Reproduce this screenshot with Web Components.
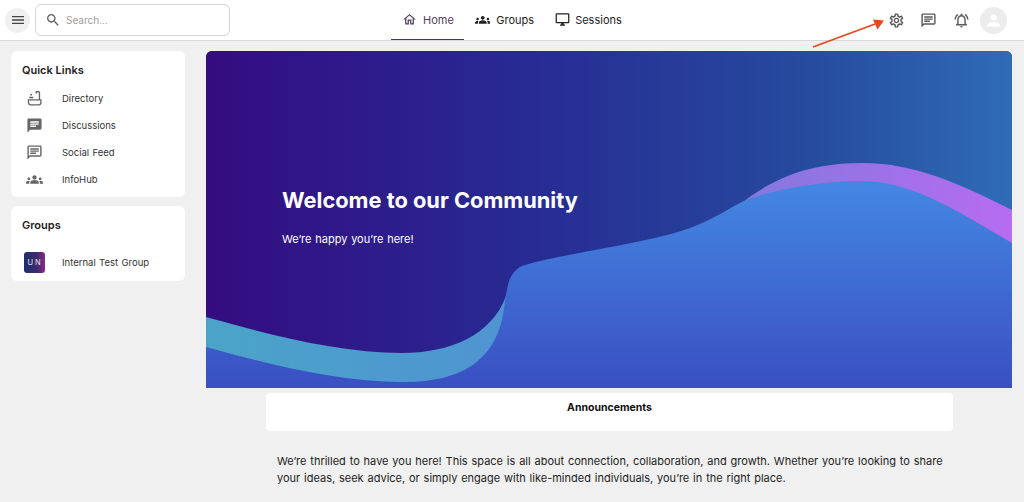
<!DOCTYPE html>
<html lang="en"><head><meta charset="utf-8"><title>Community</title>
<style>
html,body{margin:0;height:100%;overflow:hidden}
body{background:#f0f0f0;font-family:Inter,"Noto Sans",sans-serif;color:#1e1e1e;position:relative}
app-main{padding:10px 12px 0 11px;display:grid;grid-template-columns:174px 806px;column-gap:21px}
aside{display:flex;flex-direction:column;gap:9px}
</style></head><body>
<script>
const P={
menu:'<path d="M3 18h18v-2H3v2zm0-5h18v-2H3v2zm0-7v2h18V6H3z"/>',
search:'<path d="M15.5 14h-.79l-.28-.27C15.41 12.59 16 11.11 16 9.5 16 5.91 13.09 3 9.5 3S3 5.91 3 9.5 5.91 16 9.5 16c1.61 0 3.09-.59 4.23-1.57l.27.28v.79l5 4.99L20.49 19l-4.99-5zm-6 0C7.01 14 5 11.99 5 9.5S7.01 5 9.5 5 14 7.01 14 9.5 11.99 14 9.5 14z"/>',
home:'<path d="M12 5.69l5 4.5V18h-2v-6H9v6H7v-7.81l5-4.5M12 3L2 12h3v8h6v-6h2v6h6v-8h3L12 3z"/>',
groups:'<path d="M4 13c1.1 0 2-.9 2-2s-.9-2-2-2-2 .9-2 2 .9 2 2 2zm1.13 1.1C4.76 14.04 4.39 14 4 14c-.99 0-1.93.21-2.78.58C.48 14.9 0 15.62 0 16.43V18h4.5v-1.61c0-.83.23-1.61.63-2.29zM20 13c1.1 0 2-.9 2-2s-.9-2-2-2-2 .9-2 2 .9 2 2 2zm4 3.43c0-.81-.48-1.53-1.22-1.85C21.93 14.21 20.99 14 20 14c-.39 0-.76.04-1.13.1.4.68.63 1.46.63 2.29V18H24v-1.57zm-7.76-2.65c-1.17-.52-2.61-.9-4.24-.9-1.63 0-3.07.39-4.24.9C6.68 14.13 6 15.21 6 16.39V18h12v-1.61c0-1.18-.68-2.26-1.76-2.61zM12 12c1.66 0 3-1.34 3-3s-1.34-3-3-3-3 1.34-3 3 1.34 3 3 3z"/>',
desktop:'<path d="M21 2H3c-1.1 0-2 .9-2 2v12c0 1.1.9 2 2 2h7v2H8v2h8v-2h-2v-2h7c1.1 0 2-.9 2-2V4c0-1.1-.9-2-2-2zm0 14H3V4h18v12z"/>',
gear:'<path d="M19.43 12.98c.04-.32.07-.64.07-.98 0-.34-.03-.66-.07-.98l2.11-1.65c.19-.15.24-.42.12-.64l-2-3.46c-.09-.16-.26-.25-.44-.25-.06 0-.12.01-.17.03l-2.49 1c-.52-.4-1.08-.73-1.69-.98l-.38-2.65C14.46 2.18 14.25 2 14 2h-4c-.25 0-.46.18-.49.42l-.38 2.65c-.61.25-1.17.59-1.69.98l-2.49-1c-.06-.02-.12-.03-.18-.03-.17 0-.34.09-.43.25l-2 3.46c-.13.22-.07.49.12.64l2.11 1.65c-.04.32-.07.65-.07.98 0 .33.03.66.07.98l-2.11 1.65c-.19.15-.24.42-.12.64l2 3.46c.09.16.26.25.44.25.06 0 .12-.01.17-.03l2.49-1c.52.4 1.08.73 1.69.98l.38 2.65c.03.24.24.42.49.42h4c.25 0 .46-.18.49-.42l.38-2.65c.61-.25 1.17-.59 1.69-.98l2.49 1c.06.02.12.03.18.03.17 0 .34-.09.43-.25l2-3.46c.12-.22.07-.49-.12-.64l-2.11-1.65zm-1.98-1.71c.04.31.05.52.05.73 0 .21-.02.43-.05.73l-.14 1.13.89.7 1.08.84-.7 1.21-1.27-.51-1.04-.42-.9.68c-.43.32-.84.56-1.25.73l-1.06.43-.16 1.13-.2 1.35h-1.4l-.19-1.35-.16-1.13-1.06-.43c-.43-.18-.83-.41-1.23-.71l-.91-.7-1.06.43-1.27.51-.7-1.21 1.08-.84.89-.7-.14-1.13c-.03-.31-.05-.54-.05-.74s.02-.43.05-.73l.14-1.13-.89-.7-1.08-.84.7-1.21 1.27.51 1.04.42.9-.68c.43-.32.84-.56 1.25-.73l1.06-.43.16-1.13.2-1.35h1.39l.19 1.35.16 1.13 1.06.43c.43.18.83.41 1.23.71l.91.7 1.06-.43 1.27-.51.7 1.21-1.07.85-.89.7.14 1.13zM12 8c-2.21 0-4 1.79-4 4s1.79 4 4 4 4-1.79 4-4-1.79-4-4-4zm0 6c-1.1 0-2-.9-2-2s.9-2 2-2 2 .9 2 2-.9 2-2 2z"/>',
chat:'<path d="M20 2H4c-1.1 0-2 .9-2 2v18l4-4h14c1.1 0 2-.9 2-2V4c0-1.1-.9-2-2-2zm0 14H5.17L4 17.17V4h16v12z"/><path d="M6 12h8v2H6zm0-3h12v2H6zm0-3h12v2H6z"/>',
chatfill:'<path d="M20 2H4c-1.1 0-1.99.9-1.99 2L2 22l4-4h14c1.1 0 2-.9 2-2V4c0-1.1-.9-2-2-2zM6 9h12v2H6V9zm8 5H6v-2h8v2zm4-6H6V6h12v2z"/>',
bell:'<path d="M7.58 4.08 6.15 2.65C3.75 4.48 2.17 7.3 2.03 10.5h2c.15-2.65 1.51-4.97 3.55-6.42zm12.39 6.42h2c-.15-3.2-1.73-6.02-4.12-7.85l-1.42 1.43c2.02 1.45 3.39 3.77 3.54 6.42zM18 11c0-3.07-1.64-5.64-4.5-6.32V4c0-.83-.67-1.5-1.5-1.5s-1.5.67-1.5 1.5v.68C7.63 5.36 6 7.92 6 11v5l-2 2v1h16v-1l-2-2v-5zm-2 6H8v-6c0-2.48 1.51-4.5 4-4.5s4 2.02 4 4.5v6zm-4 5c.14 0 .27-.01.4-.04.65-.14 1.18-.58 1.44-1.18.1-.24.15-.5.15-.78h-4c.01 1.1.9 2 2.01 2z"/>',
person:'<path d="M12 12c2.21 0 4-1.79 4-4s-1.79-4-4-4-4 1.79-4 4 1.79 4 4 4zm0 2c-2.67 0-8 1.34-8 4v2h16v-2c0-2.66-5.33-4-8-4z"/>',
sink:'<path fill="none" stroke="currentColor" stroke-width="1.9" d="M3.5 14h17.5v4a3 3 0 0 1-3 3H6.5a3 3 0 0 1-3-3z"/><path fill="none" stroke="currentColor" stroke-width="1.9" d="M19 14V4a1.5 1.5 0 0 0-1.5-1.5H14.5V5"/><path d="M4.5 9.5h6v2h-6zM6 5.5h2.4v2.4H6z"/>'
};
function def(name,css,html){customElements.define(name,class extends HTMLElement{
 connectedCallback(){if(this.shadowRoot)return;const s=this.attachShadow({mode:'open'});s.innerHTML='<style>'+css+'</style>'+(typeof html==='function'?html(this):html);}
});}
def('app-icon',':host{display:inline-flex;width:var(--s,18px);height:var(--s,18px);color:inherit;flex:none}svg{width:100%;height:100%;fill:currentColor;display:block}',
 e=>`<svg viewBox="0 0 24 24" aria-hidden="true">${P[e.getAttribute('name')]||''}</svg>`);
def('round-button',':host{display:flex;align-items:center;justify-content:center;width:25px;height:25px;border-radius:50%;background:#f0f0f0;color:#444;--s:16px;flex:none}',
 '<app-icon name="menu"></app-icon>');
def('search-box',':host{display:flex;align-items:center;box-sizing:border-box;width:195px;height:32px;margin-left:5px;border:1px solid #d4d4d4;border-radius:6px;background:#fff;padding-left:9px;gap:5px;color:#5f5f5f;--s:16px;font-size:10px}span{color:#9c9c9c}',
 '<app-icon name="search"></app-icon><span>Search...</span>');
def('nav-tab',`:host{display:flex;align-items:center;height:40px;box-sizing:border-box;padding:0 10.5px;gap:6px;font-size:11px;color:#222;border-bottom:1.5px solid transparent}
 :host([active]){color:#50405f;border-bottom-color:#4b3560;padding:0 10.5px 0 11px}
 :host([tight]){gap:5px}`,
 e=>`<app-icon name="${e.getAttribute('icon')}" style="--s:${e.getAttribute('size')||15}px"></app-icon><slot></slot>`);
def('top-bar',`:host{display:flex;align-items:flex-start;height:41px;box-sizing:border-box;background:#fff;border-bottom:1px solid #d9d9d9}
 .left{display:flex;align-items:center;height:40px;flex:0 0 391px;padding-left:5px;box-sizing:border-box}
 .tabs{display:flex}
 .right{margin-left:auto;display:flex;align-items:center;height:40px;padding-right:17px;color:#5a5a5a}
 .right app-icon{--s:17px;margin-right:15.5px}
 .right app-icon.last{margin-right:10.5px}
 .ava{width:27px;height:27px;border-radius:50%;background:#ececec;display:flex;align-items:center;justify-content:center;color:#fff}
 .ava app-icon{--s:19px;margin:0}`,
 `<div class="left"><round-button></round-button><search-box></search-box></div>
 <nav class="tabs"><nav-tab icon="home" active>Home</nav-tab><nav-tab icon="groups" size="15.5">Groups</nav-tab><nav-tab icon="desktop" size="15" tight>Sessions</nav-tab></nav>
 <div class="right"><app-icon name="gear"></app-icon><app-icon name="chat"></app-icon><app-icon class="last" name="bell"></app-icon><div class="ava"><app-icon name="person"></app-icon></div></div>`);
def('side-card',`:host{display:block;background:#fff;border-radius:6px;padding:9.5px 0 4.5px}
 h2{margin:0 0 6px 11px;font-size:11px;line-height:18px;font-weight:600;color:#222}`,
 e=>`<h2>${e.getAttribute('heading')}</h2><slot></slot>`);
def('link-row',`:host{display:flex;align-items:center;height:27px;padding-left:13px;font-size:9.5px;word-spacing:.7px;color:#333}
 .i{width:21px;display:flex;justify-content:center;color:#666;--s:17px;margin-right:17px;flex:none}`,
 e=>`<span class="i"><app-icon name="${e.getAttribute('icon')}"></app-icon></span><slot></slot>`);
def('group-row',`:host{display:flex;align-items:center;height:27px;margin:15.5px 0 .5px;padding-left:13px;font-size:9.5px;word-spacing:.7px;color:#333}
 .a{width:21px;height:21px;border-radius:3px;background:linear-gradient(90deg,#1e2f6b,#3a2a6e 60%,#8a2c86);color:#e6e6ee;font-size:7.5px;display:flex;align-items:center;justify-content:center;letter-spacing:2px;margin-right:17px;flex:none;padding-left:1px;box-sizing:border-box}`,
 `<span class="a">UN</span><slot></slot>`);
def('hero-banner',`:host{display:block;position:relative;height:337px;border-radius:6px 6px 0 0;overflow:hidden;background:#2b2b8c}
 svg{position:absolute;inset:0;width:100%;height:100%;display:block}
 .t{position:relative;padding:136px 0 0 76px;color:#fff}
 h1{margin:0;font-size:21.8px;line-height:26px;font-weight:700}
 p{margin:18px 0 0;font-size:11px;line-height:16px;word-spacing:.7px}`,
 `<svg viewBox="206 51 806 337" preserveAspectRatio="none">
 <defs>
 <linearGradient id="bg" x1="0" x2="1" y1="0" y2="0"><stop offset="0" stop-color="#340c80"/><stop offset=".4" stop-color="#272b92"/><stop offset=".75" stop-color="#264b9f"/><stop offset="1" stop-color="#2f6cb5"/></linearGradient>
 <linearGradient id="pu" x1="0" x2="1" y1="0" y2="0"><stop offset="0" stop-color="#8278dc"/><stop offset="1" stop-color="#b66cf1"/></linearGradient>
 <linearGradient id="bl" x1="0" x2="0" y1="0" y2="1"><stop offset="0" stop-color="#4488e2"/><stop offset="1" stop-color="#3a4fc3"/></linearGradient>
 <linearGradient id="te" x1="0" x2="1" y1="0" y2="0"><stop offset="0" stop-color="#4aa4c8"/><stop offset="1" stop-color="#4f94d2"/></linearGradient>
 </defs>
 <rect x="206" y="51" width="806" height="337" fill="url(#bg)"/>
 <path fill="url(#pu)" d="M735 208C765 184 800 163 862 163C915 163 960 184 1012 210V250H735Z"/>
 <path fill="url(#te)" d="M206 317C270 335 340 353 402 353C450 353 492 335 506 296V388H206Z"/>
 <path fill="url(#bl)" d="M206 347C270 365 340 382 402 382C445 382 492 372 503 315C507 295 505 271 525 265C560 254 650 243 690 228C715 219 727 209 744 201C770 190 820 181 862 181C915 181 965 216 1012 243V388H206Z"/>
 </svg>
 <div class="t"><h1>Welcome to our Community</h1><p>We’re happy you’re here!</p></div>`);
def('announce-card',`:host{display:block;box-sizing:border-box;margin:5px 59px 0 60px;height:38px;background:#fff;border-radius:4px;text-align:center;font-size:10.5px;font-weight:700;color:#111;padding-top:7px;line-height:16px}`,'<slot></slot>');
def('intro-text',`:host{display:block;margin:22px 68px 0 71px;font-size:11px;line-height:16.5px;word-spacing:.75px;color:#222}`,'<slot></slot>');
def('app-main',':host{display:grid}','<slot></slot>');
def('callout-arrow',`:host{position:absolute;left:810px;top:15px;width:78px;height:36px;display:block}svg{width:100%;height:100%;display:block}`,
 `<svg viewBox="810 15 78 36"><path d="M813 47L875 24" stroke="#e8481c" stroke-width="1.8" fill="none"/><path d="M884 20.5L873 19.5L877.5 29.5Z" fill="#e8481c"/></svg>`);
</script>
<top-bar></top-bar>
<app-main>
 <aside>
  <side-card heading="Quick Links">
   <link-row icon="sink">Directory</link-row>
   <link-row icon="chatfill">Discussions</link-row>
   <link-row icon="chat">Social Feed</link-row>
   <link-row icon="groups">InfoHub</link-row>
  </side-card>
  <side-card heading="Groups"><group-row>Internal Test Group</group-row></side-card>
 </aside>
 <main>
  <hero-banner></hero-banner>
  <announce-card>Announcements</announce-card>
  <intro-text>We’re thrilled to have you here! This space is all about connection, collaboration, and growth. Whether you’re looking to share your ideas, seek advice, or simply engage with like-minded individuals, you’re in the right place.</intro-text>
 </main>
</app-main>
<callout-arrow></callout-arrow>
</body></html>
